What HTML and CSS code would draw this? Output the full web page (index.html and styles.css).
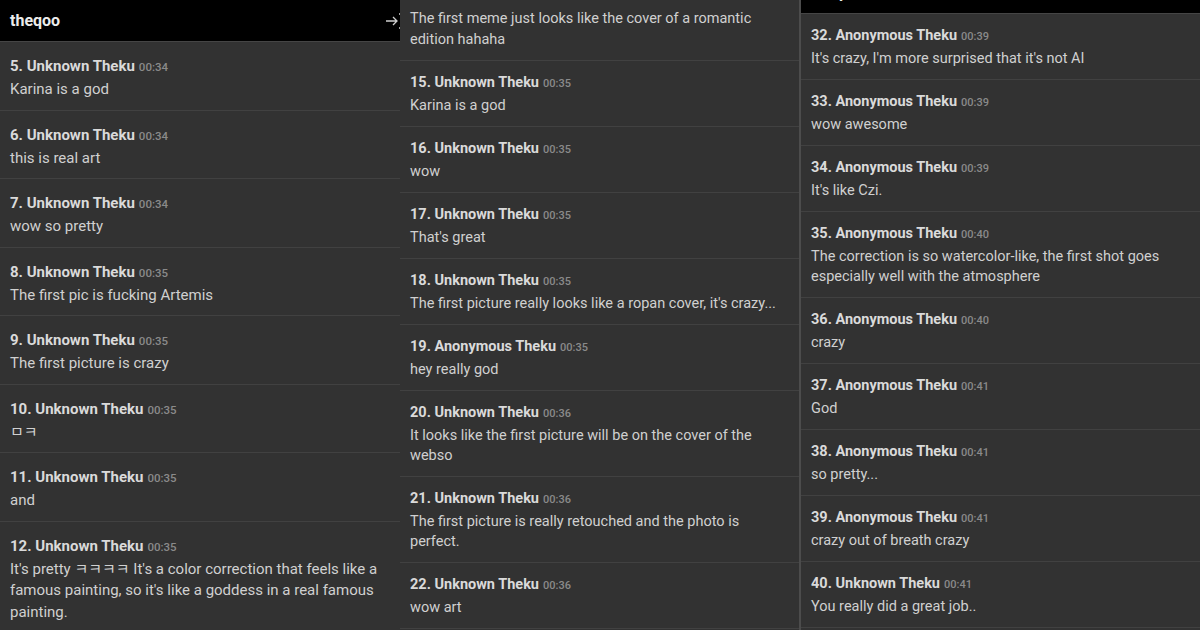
FILE: index.html
```html
<!DOCTYPE html>
<html lang="en">

<head>
    <meta charset="UTF-8">
    <meta name="viewport" content="width=device-width, initial-scale=1.0">
    <title>theqoo comments</title>
    <link rel="stylesheet" href="styles.css">
</head>

<body>

    <div class="screen">
        <!-- First capture: comments 5 - 12 -->
        <section class="panel panel-left">
            <header class="appbar">
                <span class="appbar-title">theqoo</span>
                <svg class="appbar-icon" width="18" height="18" viewBox="0 0 18 18" fill="none" stroke="currentColor" stroke-width="1.3">
                    <path d="M1 9h11M8 5l4 4-4 4M14 2h3v14h-3"/>
                </svg>
            </header>
            <ul class="comments">
                <li class="comment">
                    <div class="comment-head"><b>5. Unknown Theku</b> <span class="comment-time">00:34</span></div>
                    <p class="comment-body">Karina is a god</p>
                </li>
                <li class="comment">
                    <div class="comment-head"><b>6. Unknown Theku</b> <span class="comment-time">00:34</span></div>
                    <p class="comment-body">this is real art</p>
                </li>
                <li class="comment">
                    <div class="comment-head"><b>7. Unknown Theku</b> <span class="comment-time">00:34</span></div>
                    <p class="comment-body">wow so pretty</p>
                </li>
                <li class="comment">
                    <div class="comment-head"><b>8. Unknown Theku</b> <span class="comment-time">00:35</span></div>
                    <p class="comment-body">The first pic is fucking Artemis</p>
                </li>
                <li class="comment">
                    <div class="comment-head"><b>9. Unknown Theku</b> <span class="comment-time">00:35</span></div>
                    <p class="comment-body">The first picture is crazy</p>
                </li>
                <li class="comment">
                    <div class="comment-head"><b>10. Unknown Theku</b> <span class="comment-time">00:35</span></div>
                    <p class="comment-body">ㅁㅋ</p>
                </li>
                <li class="comment">
                    <div class="comment-head"><b>11. Unknown Theku</b> <span class="comment-time">00:35</span></div>
                    <p class="comment-body">and</p>
                </li>
                <li class="comment">
                    <div class="comment-head"><b>12. Unknown Theku</b> <span class="comment-time">00:35</span></div>
                    <p class="comment-body">It's pretty ㅋㅋㅋㅋ It's a color correction that feels like a famous painting, so it's like a goddess in a real famous painting.</p>
                </li>
            </ul>
        </section>

        <!-- Second capture: comments 14 - 22 -->
        <section class="panel panel-mid">
            <ul class="comments">
                <li class="comment comment-cut">
                    <p class="comment-body">The first meme just looks like the cover of a romantic edition hahaha</p>
                </li>
                <li class="comment">
                    <div class="comment-head"><b>15. Unknown Theku</b> <span class="comment-time">00:35</span></div>
                    <p class="comment-body">Karina is a god</p>
                </li>
                <li class="comment">
                    <div class="comment-head"><b>16. Unknown Theku</b> <span class="comment-time">00:35</span></div>
                    <p class="comment-body">wow</p>
                </li>
                <li class="comment">
                    <div class="comment-head"><b>17. Unknown Theku</b> <span class="comment-time">00:35</span></div>
                    <p class="comment-body">That's great</p>
                </li>
                <li class="comment">
                    <div class="comment-head"><b>18. Unknown Theku</b> <span class="comment-time">00:35</span></div>
                    <p class="comment-body">The first picture really looks like a ropan cover, it's crazy...</p>
                </li>
                <li class="comment">
                    <div class="comment-head"><b>19. Anonymous Theku</b> <span class="comment-time">00:35</span></div>
                    <p class="comment-body">hey really god</p>
                </li>
                <li class="comment">
                    <div class="comment-head"><b>20. Unknown Theku</b> <span class="comment-time">00:36</span></div>
                    <p class="comment-body">It looks like the first picture will be on the cover of the webso</p>
                </li>
                <li class="comment">
                    <div class="comment-head"><b>21. Unknown Theku</b> <span class="comment-time">00:36</span></div>
                    <p class="comment-body">The first picture is really retouched and the photo is perfect.</p>
                </li>
                <li class="comment">
                    <div class="comment-head"><b>22. Unknown Theku</b> <span class="comment-time">00:36</span></div>
                    <p class="comment-body">wow art</p>
                </li>
            </ul>
        </section>

        <!-- Third capture: comments 32 - 40 -->
        <section class="panel panel-right">
            <header class="appbar appbar-scrolled">
                <span class="appbar-title">theqoo</span>
            </header>
            <ul class="comments">
                <li class="comment">
                    <div class="comment-head"><b>32. Anonymous Theku</b> <span class="comment-time">00:39</span></div>
                    <p class="comment-body">It's crazy, I'm more surprised that it's not AI</p>
                </li>
                <li class="comment">
                    <div class="comment-head"><b>33. Anonymous Theku</b> <span class="comment-time">00:39</span></div>
                    <p class="comment-body">wow awesome</p>
                </li>
                <li class="comment">
                    <div class="comment-head"><b>34. Anonymous Theku</b> <span class="comment-time">00:39</span></div>
                    <p class="comment-body">It's like Czi.</p>
                </li>
                <li class="comment">
                    <div class="comment-head"><b>35. Anonymous Theku</b> <span class="comment-time">00:40</span></div>
                    <p class="comment-body">The correction is so watercolor-like, the first shot goes especially well with the atmosphere</p>
                </li>
                <li class="comment">
                    <div class="comment-head"><b>36. Anonymous Theku</b> <span class="comment-time">00:40</span></div>
                    <p class="comment-body">crazy</p>
                </li>
                <li class="comment">
                    <div class="comment-head"><b>37. Anonymous Theku</b> <span class="comment-time">00:41</span></div>
                    <p class="comment-body">God</p>
                </li>
                <li class="comment">
                    <div class="comment-head"><b>38. Anonymous Theku</b> <span class="comment-time">00:41</span></div>
                    <p class="comment-body">so pretty...</p>
                </li>
                <li class="comment">
                    <div class="comment-head"><b>39. Anonymous Theku</b> <span class="comment-time">00:41</span></div>
                    <p class="comment-body">crazy out of breath crazy</p>
                </li>
                <li class="comment">
                    <div class="comment-head"><b>40. Unknown Theku</b> <span class="comment-time">00:41</span></div>
                    <p class="comment-body">You really did a great job..</p>
                </li>
            </ul>
        </section>
    </div>

</body>

</html>
```

FILE: styles.css
```css
* {
    box-sizing: border-box;
    margin: 0;
    padding: 0;
}

body {
    font-family: Roboto, "Noto Sans CJK KR", sans-serif;
    background-color: #323232;
    color: #d2d2d2;
    overflow: hidden;
}

.screen {
    display: grid;
    grid-template-columns: 400px 399px 401px;
    height: 630px;
}

.panel {
    overflow: hidden;
    background-color: #323232;
}

.panel-right {
    border-left: 2px solid #4c4c4c;
}

/* Top bar */

.appbar {
    display: flex;
    align-items: center;
    justify-content: space-between;
    height: 42px;
    padding-left: 10px;
    background-color: #000;
    border-bottom: 1px solid #454545;
    color: #ececec;
}

.appbar-title {
    font-size: 16px;
    font-weight: bold;
}

.appbar-icon {
    margin-right: -3px;
    color: #cfcfcf;
}

/* the third capture is scrolled a little, only the bottom of the bar shows */
.appbar-scrolled {
    margin-top: -28px;
}

/* Comment list */

.comments {
    list-style: none;
}

.comment {
    padding: 12px 10px 10px;
    border-bottom: 1px solid #414141;
    font-size: 14.5px;
}

.comment-head {
    display: flex;
    align-items: baseline;
    gap: 4px;
    height: 20px;
    line-height: 20px;
    margin-bottom: 3px;
    color: #dadada;
}

.comment-time {
    font-size: 11px;
    font-weight: 500;
    line-height: 1;
    color: #8a8a8a;
}

.comment-body {
    line-height: 20px;
    color: #d0d0d0;
}

.comment-cut {
    padding-top: 9px;
}

.comment-cut .comment-body {
    line-height: 20.5px;
}

/* first capture is a touch bigger */

.panel-left .comment {
    padding: 14px 10px 9px;
    font-size: 15px;
}

.panel-left .comment-head {
    height: 21px;
    line-height: 21px;
    margin-bottom: 2px;
}

.panel-left .comment-time {
    font-size: 11.5px;
}

.panel-left .comment-body {
    line-height: 21.5px;
}
```
